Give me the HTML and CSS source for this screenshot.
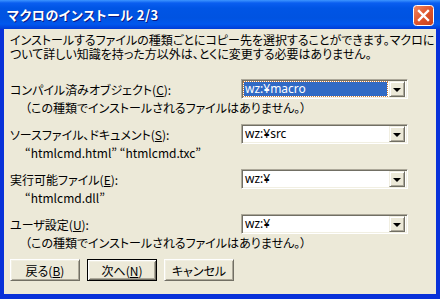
FILE: index.html
```html
<!DOCTYPE html>
<html lang="ja">
  <head>
    <meta charset="UTF-8" />
    <title>マクロのインストール 2/3</title>
    <link rel="stylesheet" href="styles.css">
  </head>
  <body>
    <div class="window">
      <div class="titlebar">
        <span class="title">マクロのインストール 2/3</span>
        <span class="close">
          <svg width="21" height="21" viewBox="0 0 21 21">
            <defs>
              <linearGradient id="closeFill" x1="0" y1="0" x2="1" y2="1">
                <stop offset="0" stop-color="#f08a64" />
                <stop offset="0.5" stop-color="#e0562c" />
                <stop offset="1" stop-color="#c4401c" />
              </linearGradient>
            </defs>
            <rect x="0.5" y="0.5" width="20" height="20" rx="3" fill="url(#closeFill)" stroke="#ffffff" />
            <path d="M6 6 L15 15 M15 6 L6 15" stroke="#ffffff" stroke-width="2.4" stroke-linecap="square" />
          </svg>
        </span>
      </div>
      <div class="client">
        <p class="intro">インストールするファイルの種類ごとにコピー先を選択することができます。マクロに<br>ついて詳しい知識を持った方以外は、とくに変更する必要はありません。</p>

        <div class="group">
          <div class="row">
            <span class="label">コンパイル済みオブジェクト(<u>C</u>):</span>
            <div class="combo">
              <span class="value selected">wz:¥macro</span>
              <span class="drop"></span>
            </div>
          </div>
          <p class="note">（この種類でインストールされるファイルはありません。）</p>
        </div>

        <div class="group">
          <div class="row">
            <span class="label">ソースファイル、ドキュメント(<u>S</u>):</span>
            <div class="combo">
              <span class="value">wz:¥src</span>
              <span class="drop"></span>
            </div>
          </div>
          <p class="note">“htmlcmd.html” “htmlcmd.txc”</p>
        </div>

        <div class="group">
          <div class="row">
            <span class="label">実行可能ファイル(<u>E</u>):</span>
            <div class="combo">
              <span class="value">wz:¥</span>
              <span class="drop"></span>
            </div>
          </div>
          <p class="note">“htmlcmd.dll”</p>
        </div>

        <div class="group">
          <div class="row">
            <span class="label">ユーザ設定(<u>U</u>):</span>
            <div class="combo">
              <span class="value">wz:¥</span>
              <span class="drop"></span>
            </div>
          </div>
          <p class="note">（この種類でインストールされるファイルはありません。）</p>
        </div>

        <div class="buttons">
          <button class="btn">戻る(<u>B</u>)</button>
          <button class="btn default">次へ(<u>N</u>)</button>
          <button class="btn">キャンセル</button>
        </div>
      </div>
    </div>
  </body>
</html>
```

FILE: styles.css
```css
body {
  margin: 0;
  background-color: #ffffff;
}
.window {
  width: 440px;
  height: 299px;
  display: flex;
  flex-direction: column;
  background: #0831d9;
  font-family: "Noto Sans CJK JP", "Noto Sans", sans-serif;
  font-size: 12px;
  line-height: 13px;
  color: #000;
  font-feature-settings: "palt";
}
.titlebar {
  height: 29px;
  display: flex;
  align-items: center;
  justify-content: space-between;
  padding: 0 6px 0 7px;
  background: linear-gradient(#3d95ff 0, #0a5ef0 3px, #0055e5 8px, #0053e1 18px, #0058ee 24px, #003dd7 29px);
}
.title {
  color: #ffffff;
  font-weight: bold;
  font-size: 13px;
  text-shadow: 1px 1px #0a1883;
  letter-spacing: 0.5px;
}
.close {
  display: flex;
  margin-top: 1px;
}
.client {
  flex: 1;
  margin: 0 4px 5px 4px;
  background-color: #ece9d8;
  padding: 4px 6px 0 6px;
}
.intro {
  margin: 0 0 18px 0;
  line-height: 14px;
  white-space: nowrap;
}
.group {
  margin-bottom: 10px;
}
.row {
  display: flex;
  align-items: center;
  height: 20px;
}
.label {
  width: 231px;
}
.combo {
  width: 167px;
  height: 20px;
  box-sizing: border-box;
  display: flex;
  align-items: center;
  padding: 0 2px 0 2px;
  background: #ffffff;
  border-style: solid;
  border-width: 1px;
  border-color: #aca899 #ffffff #ffffff #aca899;
  box-shadow: inset 1px 1px #716f64, inset -1px -1px #f1efe2;
}
.value {
  flex: 1;
  height: 14px;
  line-height: 14px;
  padding-left: 1px;
  margin-right: 2px;
  font-family: "Noto Sans", sans-serif;
  font-size: 12px;
}
.value.selected {
  background: #316ac5;
  color: #ffffff;
  outline: 1px dotted #c87a3a;
}
.drop {
  width: 16px;
  height: 16px;
  box-sizing: border-box;
  background: #ece9d8;
  border-style: solid;
  border-width: 1px;
  border-color: #f1efe2 #716f64 #716f64 #f1efe2;
  box-shadow: inset 1px 1px #ffffff, inset -1px -1px #aca899;
  display: flex;
  align-items: center;
  justify-content: center;
}
.drop::after {
  content: "";
  border-left: 4px solid transparent;
  border-right: 4px solid transparent;
  border-top: 4px solid #000;
  margin-top: 1px;
}
.note {
  margin: 2px 0 0 0;
  padding-left: 15px;
  white-space: nowrap;
}
.buttons {
  display: flex;
  gap: 7px;
  margin-top: 3px;
}
.btn {
  width: 70px;
  height: 22px;
  padding: 0;
  font-family: inherit;
  font-size: 12px;
  font-feature-settings: "palt";
  background: #ece9d8;
  border-style: solid;
  border-width: 1px;
  border-color: #ffffff #716f64 #716f64 #ffffff;
  box-shadow: inset 1px 1px #f1efe2, inset -1px -1px #aca899;
}
.btn.default {
  border: 1px solid #000;
  box-shadow: inset 1px 1px #ffffff, inset -1px -1px #716f64, inset 2px 2px #f1efe2, inset -2px -2px #aca899;
}
```
